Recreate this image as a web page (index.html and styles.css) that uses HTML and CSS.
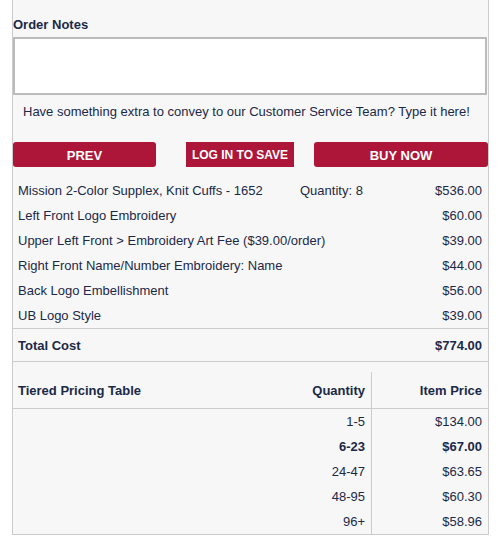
FILE: index.html
```html
<!DOCTYPE html>
<html lang="en">
<head>
    <meta charset="UTF-8">
    <meta name="viewport" content="width=device-width, initial-scale=1.0">
    <title>Order Summary</title>
    <link rel="stylesheet" href="styles.css">
</head>
<body>
    <div class="panel">
        <label class="notes-label" for="notes">Order Notes</label>
        <textarea id="notes" class="notes-input"></textarea>
        <p class="notes-help">Have something extra to convey to our Customer Service Team? Type it here!</p>

        <div class="actions">
            <button class="btn btn-prev">PREV</button>
            <button class="btn btn-save">LOG IN TO SAVE</button>
            <button class="btn btn-buy">BUY NOW</button>
        </div>

        <div class="items">
            <div class="item">
                <span>Mission 2-Color Supplex, Knit Cuffs - 1652</span>
                <span>Quantity: 8</span>
                <span class="price">$536.00</span>
            </div>
            <div class="item">
                <span>Left Front Logo Embroidery</span>
                <span></span>
                <span class="price">$60.00</span>
            </div>
            <div class="item">
                <span class="wide">Upper Left Front &gt; Embroidery Art Fee ($39.00/order)</span>
                <span class="price">$39.00</span>
            </div>
            <div class="item">
                <span class="wide">Right Front Name/Number Embroidery: Name</span>
                <span class="price">$44.00</span>
            </div>
            <div class="item">
                <span>Back Logo Embellishment</span>
                <span></span>
                <span class="price">$56.00</span>
            </div>
            <div class="item">
                <span>UB Logo Style</span>
                <span></span>
                <span class="price">$39.00</span>
            </div>
        </div>

        <div class="total">
            <span>Total Cost</span>
            <span>$774.00</span>
        </div>

        <table class="tiers">
            <thead>
                <tr>
                    <th class="tier-title">Tiered Pricing Table</th>
                    <th class="tier-qty">Quantity</th>
                    <th class="tier-price">Item Price</th>
                </tr>
            </thead>
            <tbody>
                <tr><td></td><td class="tier-qty">1-5</td><td class="tier-price">$134.00</td></tr>
                <tr class="current"><td></td><td class="tier-qty">6-23</td><td class="tier-price">$67.00</td></tr>
                <tr><td></td><td class="tier-qty">24-47</td><td class="tier-price">$63.65</td></tr>
                <tr><td></td><td class="tier-qty">48-95</td><td class="tier-price">$60.30</td></tr>
                <tr><td></td><td class="tier-qty">96+</td><td class="tier-price">$58.96</td></tr>
            </tbody>
        </table>
    </div>
</body>
</html>
```

FILE: styles.css
```css
body {
    margin: 0;
    background-color: #fff;
    font-family: "Liberation Sans", Arial, sans-serif;
    font-size: 13px;
    color: #1b2948;
}

.panel {
    width: 475px;
    margin-left: 12px;
    background-color: #f7f7f7;
    border-left: 1px solid #ccc;
    border-right: 1px solid #ccc;
    border-bottom: 1px solid #ccc;
}

.notes-label {
    display: block;
    padding-top: 17px;
    margin-bottom: 4px;
    font-weight: bold;
    line-height: 16px;
}

.notes-input {
    display: block;
    box-sizing: border-box;
    width: 474px;
    height: 58px;
    margin: 0;
    border: 2px solid #bbb;
    background-color: #fff;
    resize: none;
}

.notes-help {
    margin: 9px 0 0;
    padding-left: 10px;
    line-height: 16px;
}

.actions {
    display: flex;
    margin-top: 22px;
}

.btn {
    height: 25px;
    padding: 1px 0 0;
    border: none;
    background-color: #ad1639;
    color: #fff;
    font-family: "Liberation Sans", Arial, sans-serif;
    font-weight: bold;
    font-size: 13px;
}

.btn-prev {
    width: 143px;
    border-radius: 3px;
}

.btn-save {
    width: 108px;
    margin-left: 30px;
    font-size: 12px;
}

.btn-buy {
    width: 174px;
    margin-left: 20px;
    margin-right: -1px;
    border-radius: 3px;
}

.items {
    margin-top: 11px;
}

.item {
    display: grid;
    grid-template-columns: 282px 1fr auto;
    align-items: center;
    height: 25px;
    padding: 0 6px 0 5px;
}

.item .wide {
    grid-column: span 2;
}

.price {
    text-align: right;
}

.total {
    display: flex;
    justify-content: space-between;
    align-items: center;
    height: 32px;
    padding: 0 6px 0 5px;
    border-top: 1px solid #ccc;
    border-bottom: 1px solid #ccc;
    font-weight: bold;
}

.tiers {
    width: 100%;
    margin-top: 10px;
    border-collapse: collapse;
}

.tiers th {
    height: 36px;
    padding: 0 6px 0 5px;
    border-bottom: 1px solid #ccc;
    font-weight: bold;
}

.tiers td {
    height: 25px;
    padding: 0 6px 0 5px;
}

.tier-title {
    text-align: left;
}

.tier-qty {
    text-align: right;
    border-right: 1px solid #ccc;
}

.tier-price {
    width: 105px;
    text-align: right;
}

.current td {
    font-weight: bold;
}
```
